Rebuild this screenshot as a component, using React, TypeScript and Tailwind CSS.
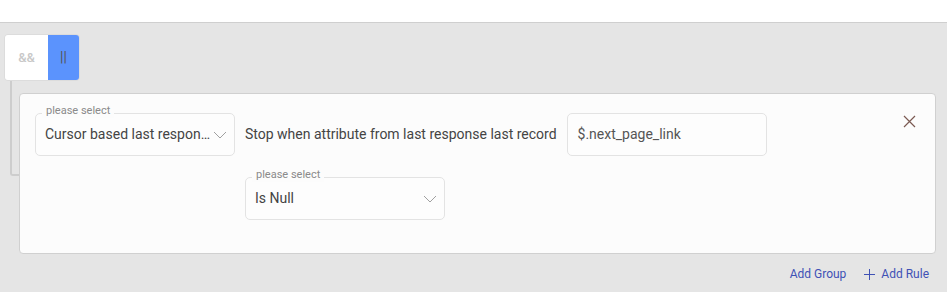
import React from 'react';

const font = { fontFamily: 'Roboto, "Liberation Sans", sans-serif' };

const Chevron: React.FC = () => (
  <svg width="14" height="8" viewBox="0 0 14 8" fill="none" className="shrink-0">
    <path d="M1 1l6 6 6-6" stroke="#a0a0a0" strokeWidth="1" />
  </svg>
);

const OutlinedSelect: React.FC<{ value: string }> = ({ value }) => (
  <div className="relative w-[200px] h-[43px] border border-[#e3e3e3] rounded-[5px] bg-[#fdfdfd] flex items-center pl-[9px] pr-[7px]">
    <span className="absolute -top-[10px] left-[6px] px-[4px] bg-[#fcfcfc] text-[11px] leading-[14px] text-[#8a8a8a]">
      please select
    </span>
    <span className="flex-1 whitespace-nowrap text-[14px] text-[#444]">{value}</span>
    <Chevron />
  </div>
);

export default function App() {
  return (
    <div className="w-[947px] h-[292px] bg-white overflow-hidden" style={font}>
      <div className="h-[22px]" />
      <div className="h-[270px] bg-[#e5e5e5] border-t border-[#cfcfcf] pt-[11px] pl-[4px] pr-[11px]">
        {/* combinator toggle */}
        <div className="flex w-[76px] h-[47px] rounded-[4px] border border-[#dcdcdc] overflow-hidden">
          <div className="w-[43px] bg-white flex items-center justify-center text-[13px] text-[#c8c8c8] font-medium">&amp;&amp;</div>
          <div className="flex-1 bg-[#5b93fd] flex items-center justify-center text-[14px] text-[#555]">||</div>
        </div>

        <div className="relative mt-[12px] pl-[15px]">
          <div className="absolute left-[6px] -top-[12px] w-[12px] h-[95px] border-l-2 border-b-2 border-[#cdcdcd] rounded-bl-[3px]" />
          <div className="relative h-[161px] bg-[#fcfcfc] border border-[#d0d0d0] rounded-[4px] pt-[19px] pl-[15px] pr-[19px]">
            <div className="flex items-center">
              <OutlinedSelect value="Cursor based last respon…" />
              <span className="ml-[10px] text-[14px] text-[#444]">Stop when attribute from last response last record</span>
              <div className="ml-[10px] w-[200px] h-[43px] border border-[#e3e3e3] rounded-[5px] bg-[#fdfdfd] flex items-center pl-[10px] text-[14px] text-[#555]">
                $.next_page_link
              </div>
              <div className="flex-1" />
              <button className="self-start mt-[2px]">
                <svg width="13" height="13" viewBox="0 0 13 13" fill="none">
                  <path d="M1 1l11 11M12 1L1 12" stroke="#7b5a52" strokeWidth="1.2" />
                </svg>
              </button>
            </div>
            <div className="mt-[21px] ml-[210px]">
              <OutlinedSelect value="Is Null" />
            </div>
          </div>
        </div>

        <div className="flex justify-end items-center gap-[18px] mt-[11px] pr-[7px] text-[12px] text-[#3f51b5]">
          <span>Add Group</span>
          <span className="flex items-center gap-[6px]">
            <svg width="11" height="11" viewBox="0 0 11 11" fill="none">
              <path d="M5.5 0v11M0 5.5h11" stroke="#3f51b5" strokeWidth="1" />
            </svg>
            Add Rule
          </span>
        </div>
      </div>
    </div>
  );
}
